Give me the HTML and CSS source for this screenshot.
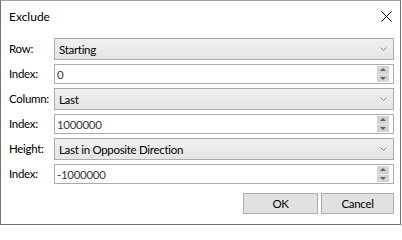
FILE: index.html
```html
<!DOCTYPE html>
<html>
<head>
<meta charset="utf-8">
<link rel="stylesheet" href="styles.css">
</head>
<body>
<div class="dialog">
  <div class="titlebar">
    <span class="title">Exclude</span>
    <svg class="close" width="11" height="11" viewBox="0 0 11 11"><path d="M0.5 0.5L10.5 10.5M10.5 0.5L0.5 10.5" stroke="#000" stroke-width="1" fill="none"/></svg>
  </div>
  <div class="form">
    <span class="label">Row:</span>
    <div class="combo"><span class="value">Starting</span><svg class="chev" width="7" height="4" viewBox="0 0 7 4"><path d="M0.5 0.5L3.5 3.5L6.5 0.5" stroke="#8a8a8a" stroke-width="1" fill="none"/></svg></div>
    <span class="label">Index:</span>
    <div class="spin"><span class="num">0</span><div class="spinbtns"><div class="half"><span class="up"></span></div><div class="half"><span class="down"></span></div></div></div>
    <span class="label">Column:</span>
    <div class="combo"><span class="value">Last</span><svg class="chev" width="7" height="4" viewBox="0 0 7 4"><path d="M0.5 0.5L3.5 3.5L6.5 0.5" stroke="#8a8a8a" stroke-width="1" fill="none"/></svg></div>
    <span class="label">Index:</span>
    <div class="spin"><span class="num">1000000</span><div class="spinbtns"><div class="half"><span class="up"></span></div><div class="half"><span class="down"></span></div></div></div>
    <span class="label">Height:</span>
    <div class="combo"><span class="value">Last in Opposite Direction</span><svg class="chev" width="7" height="4" viewBox="0 0 7 4"><path d="M0.5 0.5L3.5 3.5L6.5 0.5" stroke="#8a8a8a" stroke-width="1" fill="none"/></svg></div>
    <span class="label">Index:</span>
    <div class="spin"><span class="num">-1000000</span><div class="spinbtns"><div class="half"><span class="up"></span></div><div class="half"><span class="down"></span></div></div></div>
  </div>
  <div class="buttons">
    <div class="btn ok">OK</div>
    <div class="btn cancel">Cancel</div>
  </div>
</div>
</body>
</html>
```

FILE: styles.css
```css
html, body {
  margin: 0;
  padding: 0;
  background: #ffffff;
}
body {
  width: 402px;
  height: 225px;
  overflow: hidden;
  font-family: Lato, "Liberation Sans", sans-serif;
  font-size: 11.5px;
  letter-spacing: -0.3px;
  color: #000;
}
.dialog {
  box-sizing: border-box;
  width: 401px;
  height: 225px;
  border: 1px solid #707070;
  border-top-color: #a0a0a0;
  background: #fff;
  display: flex;
  flex-direction: column;
}
.titlebar {
  height: 29px;
  display: flex;
  align-items: center;
  justify-content: space-between;
  padding: 0 8px 0 8px;
  flex: none;
}
.title {
  font-size: 12px;
  letter-spacing: 0;
  color: #000;
  padding-top: 1px;
}
.close {
  display: block;
  margin-top: 1px;
}
.form {
  margin-top: 8px;
  padding: 0 6px 0 8px;
  display: grid;
  grid-template-columns: 45px 1fr;
  grid-template-rows: 22px 20px 22px 20px 22px 20px;
  row-gap: 4px;
  align-items: center;
}
.label {
  color: #000;
  line-height: 14px;
  margin-top: -1px;
}
.combo {
  box-sizing: border-box;
  height: 22px;
  border: 1px solid #acacac;
  background: linear-gradient(#f0f0f0, #e5e5e5);
  display: flex;
  align-items: center;
  padding: 0 6px 0 4px;
}
.combo .value {
  flex: 1;
  color: #000;
}
.chev {
  display: block;
}
.spin {
  box-sizing: border-box;
  height: 20px;
  border: 1px solid #acacac;
  background: #fff;
  display: flex;
  align-items: center;
  padding: 0 4px 0 2px;
}
.spin .num {
  flex: 1;
  color: #3a3a3a;
}
.spinbtns {
  width: 12px;
  height: 16px;
  display: flex;
  flex-direction: column;
  background: #d4d4d4;
}
.half {
  flex: 1;
  display: flex;
  align-items: center;
  justify-content: center;
}
.half + .half {
  border-top: 1px solid #e6e6e6;
}
.up {
  width: 0;
  height: 0;
  border-left: 3px solid transparent;
  border-right: 3px solid transparent;
  border-bottom: 3px solid #606060;
}
.down {
  width: 0;
  height: 0;
  border-left: 3px solid transparent;
  border-right: 3px solid transparent;
  border-top: 3px solid #606060;
}
.buttons {
  margin-top: 9px;
  padding-right: 6px;
  display: flex;
  justify-content: flex-end;
  gap: 3px;
}
.btn {
  box-sizing: border-box;
  height: 21px;
  border: 1px solid #adadad;
  background: #e1e1e1;
  display: flex;
  align-items: center;
  justify-content: center;
  color: #000;
}
.ok {
  width: 75px;
}
.cancel {
  width: 73px;
}
```
